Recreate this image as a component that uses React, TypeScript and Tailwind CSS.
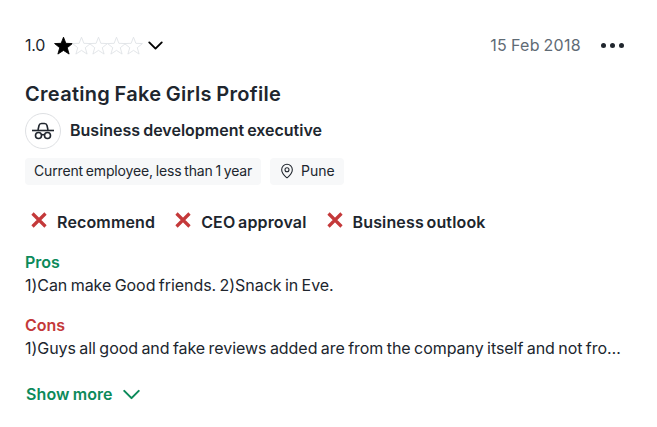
import {ChevronDownIcon, MapPinIcon} from 'lucide-react';

const font = {fontFamily: 'Inter, sans-serif'};

function Star({filled}: {filled: boolean}) {
  return (
    <svg viewBox="0 0 24 24" className="w-[21px] h-[21px] -mr-[3.5px]">
      <path
        d="M12 2.500l2.700 7 7.500.3-5.900 4.700 2.100 7.300L12 17.600l-6.400 4.200 2.100-7.300-5.900-4.700 7.500-.3z"
        fill={filled ? '#000000' : '#ffffff'}
        stroke={filled ? '#000000' : '#dfe2e6'}
        strokeWidth="1"
      />
    </svg>
  );
}

function Rating({label}: {label: string}) {
  return (
    <div className="flex items-center gap-[9px]">
      <svg viewBox="0 0 18 18" className="w-[18px] h-[18px] -mt-[4px] text-[#c4393a]">
        <path d="M2.500 2.500l13 13M15.500 2.500l-13 13" stroke="currentColor" strokeWidth="3.200" fill="none" />
      </svg>
      <span className="text-[16px] leading-6 font-semibold tracking-[0.15px] [word-spacing:-1.500px] text-[#20262e]">
        {label}
      </span>
    </div>
  );
}

export default function App() {
  return (
    <div style={font} className="w-[657px] h-[427px] bg-white px-[25px] pt-[33px] text-[#20262e]">
      <div className="flex items-center justify-between h-6 pr-[8px]">
        <div className="flex items-center">
          <span className="text-[16px] leading-6 mr-[8px] tracking-[-0.2px]">1.0</span>
          {[true, false, false, false, false].map((filled, i) => (
            <Star key={i} filled={filled} />
          ))}
          <ChevronDownIcon className="w-[25px] h-[25px] ml-[2px] text-black" strokeWidth={1.8} />
        </div>
        <div className="flex items-center gap-[20px]">
          <span className="text-[16px] leading-6 tracking-[0.3px] [word-spacing:-1px] text-[#5f6b75]">15 Feb 2018</span>
          <div className="flex gap-[4px]">
            <span className="w-[5px] h-[5px] rounded-full bg-[#20262e]" />
            <span className="w-[5px] h-[5px] rounded-full bg-[#20262e]" />
            <span className="w-[5px] h-[5px] rounded-full bg-[#20262e]" />
          </div>
        </div>
      </div>

      <h2 className="mt-[24px] text-[20px] leading-[26px] font-semibold tracking-[0.3px] [word-spacing:-1px]">
        Creating Fake Girls Profile
      </h2>

      <div className="mt-[6px] flex items-center gap-[9px]">
        <div className="w-[36px] h-[36px] rounded-full border border-[#dee0e3] flex items-center justify-center">
          <svg viewBox="0 0 24 24" className="w-[24px] h-[24px]" fill="none" stroke="#20262e" strokeWidth="1.600">
            <path d="M7 11l1-4.500c.3-1.300 1.300-2 2.500-2h3c1.200 0 2.200.7 2.500 2l1 4.500" />
            <path d="M1 11.500h22" />
            <circle cx="7.500" cy="16.500" r="3" />
            <circle cx="16.500" cy="16.500" r="3" />
            <path d="M10.500 16c1-.6 2-.6 3 0" />
          </svg>
        </div>
        <span className="text-[16px] leading-6 font-semibold [word-spacing:-1px] mb-[2px]">
          Business development executive
        </span>
      </div>

      <div className="mt-[9px] flex gap-[9px]">
        <div className="h-[27px] w-[236px] pb-[2px] px-[9px] rounded-[4px] bg-[#f7f8f9] flex items-center text-[14px] tracking-[-0.15px] [word-spacing:-1px] whitespace-nowrap">
          Current employee, less than 1 year
        </div>
        <div className="h-[27px] w-[74px] pb-[2px] px-[9px] rounded-[4px] bg-[#f7f8f9] flex items-center gap-[6px] text-[14px]">
          <MapPinIcon className="w-[16px] h-[16px]" strokeWidth={1.6} />
          Pune
        </div>
      </div>

      <div className="mt-[25px] ml-[5px] flex gap-[19px]">
        <Rating label="Recommend" />
        <Rating label="CEO approval" />
        <Rating label="Business outlook" />
      </div>

      <div className="mt-[17px] text-[16px] leading-[23px] tracking-[-0.05px] [word-spacing:-1px]">
        <div className="font-semibold text-[#0c8a5a]">Pros</div>
        <div>1)Can make Good friends. 2)Snack in Eve.</div>
      </div>

      <div className="mt-[17px] text-[16px] leading-[23px] tracking-[-0.05px] [word-spacing:-1px]">
        <div className="font-semibold text-[#c4393a]">Cons</div>
        <div className="w-[596px] truncate">
          1)Guys all good and fake reviews added are from the company itself and not from actual employees
        </div>
      </div>

      <div className="mt-[22px] ml-[1px] flex items-center gap-[4px] text-[#0c8a5a]">
        <span className="text-[16px] leading-6 font-semibold tracking-[0.1px] [word-spacing:-1px]">Show more</span>
        <ChevronDownIcon className="w-[29px] h-[29px] -my-[3px]" strokeWidth={1.7} />
      </div>
    </div>
  );
}
